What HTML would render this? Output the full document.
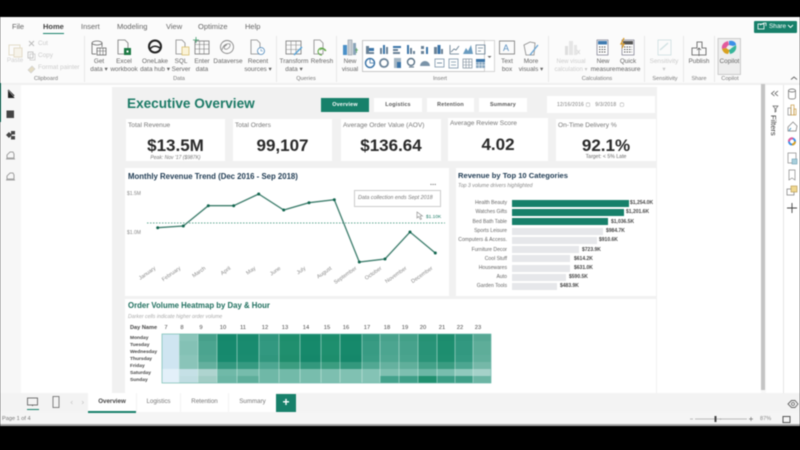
<!DOCTYPE html>
<html><head><meta charset="utf-8"><style>
html,body{margin:0;padding:0;background:#000}
#r{position:relative;width:800px;height:450px;overflow:hidden;background:#000;font-family:"Liberation Sans",sans-serif;color:#444}
#w{position:absolute;left:0;top:0;width:800px;height:450px;filter:blur(.45px)}
#w div{position:absolute;white-space:nowrap}
.t{font-size:7.5px;color:#666}
.c{text-align:center;font-size:6.4px;line-height:8.3px;color:#666}
.g{font-size:5.6px;color:#777;text-align:center}
.sep{width:1px;background:#e9e9e9;top:36px;height:46px}
.card{background:#fff}
.k{font-size:6.6px;color:#777}
.v{font-size:17px;font-weight:bold;color:#2a2a2a;text-align:center}
.nav{background:#fff;font-size:5.4px;font-weight:bold;color:#555;text-align:center;line-height:14px;height:14px;top:98px;letter-spacing:.2px}
.bl{font-size:5.1px;color:#666;text-align:right;width:70px;left:437px;line-height:8px}
.bv{font-size:5px;font-weight:bold;color:#444;line-height:8px}
.b{left:512px;height:7px;background:#e6e7ea}
.hh{font-size:5.8px;color:#444;top:324px;line-height:8px;text-align:center;width:16px}
.dn{font-size:4.9px;color:#444;left:130px;line-height:7px;font-weight:bold}
.tab{font-size:6.2px;color:#777;text-align:center;background:#fff;top:393px;height:19px;line-height:18px}
svg{position:absolute;overflow:visible}
svg text{font-family:"Liberation Sans",sans-serif}
</style></head><body><div id="r"><div id="w">

<!-- app bg -->
<div style="left:0;top:17px;width:800px;height:408px;background:#f7f7f7"></div>
<div style="left:0;top:17px;width:800px;height:67px;background:#fbfbfb"></div>
<div style="left:0;top:83px;width:800px;height:2px;background:#f0f0f0"></div>
<div style="left:21px;top:85px;width:740px;height:308px;background:#fff"></div>
<div style="left:766px;top:85px;width:34px;height:308px;background:#fff"></div>
<div style="left:783px;top:85px;width:1px;height:308px;background:#e6e6e6"></div>
<div style="left:761px;top:84px;width:4px;height:306px;background:#c4c4c4"></div>
<div style="left:0;top:83px;width:1px;height:39px;background:#17806a"></div>

<!-- tabs -->
<div class="t" style="left:12px;top:22px">File</div>
<div class="t" style="left:43px;top:22px;color:#444;font-weight:bold">Home</div>
<div style="left:43px;top:32.5px;width:21px;height:1.5px;background:#17806a"></div>
<div class="t" style="left:81px;top:22px">Insert</div>
<div class="t" style="left:117px;top:22px">Modeling</div>
<div class="t" style="left:166px;top:22px">View</div>
<div class="t" style="left:198px;top:22px">Optimize</div>
<div class="t" style="left:245px;top:22px">Help</div>

<div style="left:754px;top:20.5px;width:43px;height:12px;background:#17806a;border-radius:1px"></div>
<div style="left:769px;top:21.500px;font-size:6.4px;color:#fff;line-height:10px">Share</div>
<svg style="left:0;top:0" width="800" height="450" fill="none">
<rect x="758" y="24" width="6" height="5" stroke="#fff" stroke-width=".8"/><path d="M760 25l4-2h2v3" stroke="#fff" stroke-width=".8"/>
<path d="M788 25l2.500 2.500 2.500-2.500" stroke="#fff" stroke-width=".9"/>

<!-- clipboard -->
<rect x="9" y="45" width="11" height="10" stroke="#e3dcc8"/><rect x="14" y="48" width="8" height="9" fill="#f6f3ea" stroke="#e3dcc8"/>
<path d="M29 41l5 5M34 41l-5 5" stroke="#bbb"/><rect x="28" y="52" width="5" height="6" stroke="#bbb" stroke-width=".8"/><rect x="30" y="54" width="5" height="6" stroke="#ccc" stroke-width=".8"/>
<path d="M28 70l4-4 3 3-4 4z" fill="#e4dcc4" stroke="#ccc" stroke-width=".6"/>
<!-- data -->
<ellipse cx="97" cy="43" rx="5" ry="2" stroke="#666" stroke-width=".8"/><path d="M92 43v11M102 43v4" stroke="#666" stroke-width=".8"/><path d="M92 54h4" stroke="#666" stroke-width=".8"/><rect x="97" y="48" width="9" height="7" stroke="#666" stroke-width=".8"/><path d="M100 48v7M103 48v7M97 51h9" stroke="#666" stroke-width=".6"/>
<path d="M118 40h7l3 3v11h-10z" stroke="#777" stroke-width=".8"/><rect x="124" y="48" width="7" height="7" fill="#1e7a45"/><rect x="126.500" y="50.500" width="2" height="2" fill="#fff"/>
<circle cx="155" cy="46.500" r="6" stroke="#222" stroke-width="2"/><path d="M150 49c3-4 7-3 10-1" stroke="#222" stroke-width="1.500"/>
<path d="M176 40h6l3 3v11h-9z" stroke="#888" stroke-width=".8"/><rect x="182" y="47" width="7" height="8" fill="#fbf3d8" stroke="#d4b860" stroke-width=".7"/>
<rect x="195" y="41" width="14" height="13" stroke="#777" stroke-width=".8"/><path d="M195 44.500h14M199.500 41v13M204 41v13M195 49h14" stroke="#777" stroke-width=".6"/><path d="M196 37v6M193 40h6" stroke="#3d9b6a" stroke-width=".8"/>
<circle cx="227" cy="47" r="6.500" stroke="#888" stroke-width=".9"/><path d="M222 50c1-5 5-7 8-6 1 3-3 6-5 5s0-4 2-4" stroke="#888" stroke-width=".8"/>
<path d="M251 40h6l3 3v11h-9z" stroke="#888" stroke-width=".8"/><circle cx="261" cy="51" r="3.500" fill="#fff" stroke="#4a85b8" stroke-width=".8"/><path d="M261 49v2h2" stroke="#4a85b8" stroke-width=".6"/>
<!-- queries -->
<rect x="286" y="41" width="15" height="13" stroke="#777" stroke-width=".8"/><path d="M286 45h15M291 41v13M296 41v13M286 49.500h15" stroke="#888" stroke-width=".6"/><path d="M294 55l8-8" stroke="#5aa5d8" stroke-width="1.500"/>
<path d="M314 40h6l3 3v11h-9z" stroke="#888" stroke-width=".8"/><path d="M322 55a3.500 3.500 0 1 1 3-4" stroke="#5fa846" stroke-width="1.100"/><path d="M320 50a3.500 3.500 0 0 1 6 1" stroke="#5fa846" stroke-width="1"/>
<!-- new visual -->
<rect x="343" y="45" width="4" height="10" fill="#4a90c8"/><rect x="348" y="40" width="4" height="15" fill="#c8ced4" stroke="#8a96a0" stroke-width=".6"/><rect x="353" y="43" width="3" height="12" fill="#8aa4b8"/><path d="M355 50h3M356.500 48v5" stroke="#4c9a58" stroke-width=".7"/>
<rect x="362.500" y="40.500" width="122" height="31" fill="#fff" stroke="#bbb" stroke-width=".8"/>
<rect x="484.500" y="40.500" width="10" height="31" fill="#fff" stroke="#ccc" stroke-width=".8"/>
<path d="M487.500 56h4l-2 2z" fill="#666"/>
<!-- visual gallery top row -->
<g fill="#6a8297">
<rect x="366" y="46" width="3" height="6"/><rect x="366" y="52" width="8" height="2"/><rect x="369" y="48" width="5" height="3" fill="#3c75a8"/>
<rect x="380" y="48" width="2" height="6"/><rect x="383" y="45" width="2" height="9" fill="#3c75a8"/><rect x="386" y="47" width="2" height="7"/>
<rect x="393" y="46" width="8" height="2" fill="#3c75a8"/><rect x="393" y="49" width="5" height="2"/><rect x="393" y="52" width="7" height="2"/>
<rect x="407" y="45" width="2" height="9" fill="#3c75a8"/><rect x="410" y="48" width="2" height="6"/><rect x="413" y="51" width="2" height="3"/>
<rect x="421" y="46" width="3" height="3"/><rect x="426" y="47" width="2" height="7" fill="#3c75a8"/><rect x="421" y="51" width="3" height="3"/>
<rect x="434" y="47" width="3" height="7"/><rect x="437.500" y="45" width="3" height="9" fill="#3c75a8"/><rect x="441" y="49" width="2" height="5"/>
</g>
<path d="M450 45v9h9M451 52l3-3 2 1 3-4" stroke="#5c7488" stroke-width=".8"/>
<path d="M463 54l3-6 2 3 3-6 2 9z" fill="#6a9cc0"/>
<rect x="476" y="45" width="9" height="9" stroke="#6a8297" stroke-width=".8"/><path d="M478 48h5M478 51h3" stroke="#6a8297" stroke-width=".8"/>
<!-- bottom row -->
<circle cx="370" cy="63" r="4.500" stroke="#3c75a8" stroke-width="1.500"/><path d="M370 59v4h4" stroke="#3c75a8" stroke-width=".8"/>
<circle cx="384" cy="63" r="4" stroke="#6a8297" stroke-width="1.800"/>
<rect x="394" y="58" width="7" height="10" fill="#a4b6c4"/><rect x="397" y="62" width="4" height="6" fill="#3c75a8"/>
<circle cx="411" cy="62" r="3.500" stroke="#5c7488" stroke-width="1.400"/><path d="M409 67h5" stroke="#5c7488"/>
<path d="M420 66a5 5 0 0 1 10 0z" fill="#7a93a8"/>
<rect x="435" y="59" width="9" height="8" stroke="#7a93a8" stroke-width=".8"/><path d="M437 63h5" stroke="#7a93a8"/>
<rect x="449" y="59" width="9" height="9" stroke="#7a93a8" stroke-width=".8"/><path d="M451 62h5M451 65h5" stroke="#7a93a8" stroke-width=".8"/>
<rect x="463" y="59" width="9" height="9" stroke="#7a8a98" stroke-width=".7"/><path d="M463 62h9M463 65h9M466 59v9M469 59v9" stroke="#7a8a98" stroke-width=".6"/>
<rect x="476" y="59" width="9" height="9" fill="#8aa8c0"/><path d="M476 62h9M476 65h9M479 59v9M482 59v9" stroke="#fff" stroke-width=".5"/><rect x="476" y="59" width="9" height="3" fill="#3c75a8"/>
<!-- text box -->
<rect x="499.500" y="41" width="15" height="13" stroke="#777" stroke-width=".8"/><text x="503" y="51" font-size="9" fill="#5a8fc0" stroke="none">A</text>
<path d="M524 45l6-3 5 1-1 12h-8z" stroke="#888" stroke-width=".8"/><path d="M530 55l8-10" stroke="#6ba6d4" stroke-width="1.400"/>
<!-- calculations -->
<g opacity=".45"><rect x="565" y="46" width="3" height="9" fill="#bbb"/><rect x="569" y="41" width="4" height="14" fill="#ccc"/><rect x="574" y="45" width="3" height="10" fill="#ccc"/><path d="M577 50l3 4M580 50l-3 4" stroke="#aaa" stroke-width=".8"/></g>
<rect x="597" y="40" width="11" height="15" fill="#fff" stroke="#778" stroke-width=".7"/><rect x="598" y="41" width="9" height="3.500" fill="#3f7bb0"/><path d="M599 47h7M599 49.500h7M599 52h7" stroke="#555" stroke-width="1.100" stroke-dasharray="1.500 1"/>
<rect x="622" y="40" width="12" height="15" fill="#fff" stroke="#778" stroke-width=".7"/><rect x="623" y="41" width="10" height="3.500" fill="#555"/><path d="M624 47h8M624 49.500h8M624 52h8" stroke="#555" stroke-width="1.100" stroke-dasharray="1.500 1"/><path d="M624 38l-3 6h3l-2 4" stroke="#d89a28" stroke-width="1.300"/>
<!-- sensitivity -->
<g opacity=".5"><rect x="658" y="40" width="13" height="15" stroke="#a8c8cc" stroke-width=".9"/><path d="M660 50l8-7" stroke="#a8c8cc" stroke-width="1.400"/></g>
<!-- publish -->
<path d="M697 42h5v6h4v7h-14v-7h5z" stroke="#555" stroke-width=".8"/><path d="M699 56v-8M697 50l2-2 2 2" stroke="#555" stroke-width=".7"/>
<!-- copilot -->
<rect x="718" y="38.500" width="22.500" height="36" fill="#eee" stroke="#bbb" stroke-width=".7"/>
<path d="M729 41c4-1 7 1 7 4l-3 1-4-1z" fill="#3b8fe8"/><path d="M722 49c-1-4 2-7 6-8l1 4-3 3z" fill="#e25a9c"/><path d="M722 49c1 3 3 5 6 5l2-4-4-2z" fill="#d8a11f"/><path d="M736 45c1 4-1 8-6 9l-1-4 4-3z" fill="#37b59a"/><circle cx="729" cy="47.500" r="2.200" fill="#eee"/>
<path d="M791 79.500l3-2.500 3 2.500" stroke="#666" stroke-width=".9"/>

<!-- left rail icons -->
<path d="M8 90v8h7z" fill="#222"/><path d="M8 90l6 6" stroke="#222" stroke-width="1.500"/><path d="M8 90l7 8" stroke="#fff" stroke-width=".5"/>
<rect x="6.500" y="110.500" width="7.500" height="7.500" fill="#444"/>
<path d="M6 135l3-3 3 3-3 3z" fill="#444"/><rect x="11" y="131" width="4" height="3.500" fill="#444"/><rect x="11" y="136" width="4" height="3.500" fill="#444"/>
<path d="M7 158v-3l3-3h3l1 2v4zM6 159h9" stroke="#888" stroke-width=".8"/>
<path d="M7 179v-3l3-3h3l1 2v4zM6 180h9" stroke="#888" stroke-width=".8"/>

<!-- right pane icons -->
<path d="M772 91l3 2.500-3 2.500M775.500 91l3 2.500-3 2.500" transform="rotate(180 775 93.500)" stroke="#555" stroke-width=".8"/>
<path d="M773 106h5l-2 2.500v3l-1 .5v-3.500z" stroke="#666" stroke-width=".7"/>
<ellipse cx="792" cy="90.500" rx="3.500" ry="1.500" stroke="#666" stroke-width=".7"/><path d="M788.500 90.500v7c0 2 7 2 7 0v-7" stroke="#666" stroke-width=".7"/>
<rect x="788" y="108" width="3" height="7" stroke="#888" stroke-width=".7"/><rect x="791" y="105" width="3" height="10" stroke="#c89a40" stroke-width=".7"/><rect x="794" y="109" width="2" height="6" stroke="#c89a40" stroke-width=".7"/>
<path d="M788 127l5-5 4 4-1 5h-8z" stroke="#777" stroke-width=".7"/><path d="M791 128c-1 1-2 3-2 3" stroke="#58a0c8"/>
<circle cx="792" cy="141.500" r="3" stroke="#3b8fe8" stroke-width="2"/><path d="M789 141.500a3 3 0 0 1 4-3" stroke="#e25a9c" stroke-width="2"/><path d="M792 144.500a3 3 0 0 0 3-3" stroke="#d8a11f" stroke-width="2"/>
<rect x="788" y="153" width="8" height="10" stroke="#888" stroke-width=".7"/><rect x="792" y="159" width="5" height="5" fill="#a8d0dc" stroke="#5a90a8" stroke-width=".5"/>
<path d="M789 170h6v10l-3-2-3 2z" stroke="#888" stroke-width=".7"/>
<rect x="787" y="189" width="7" height="6" stroke="#777" stroke-width=".7"/><rect x="791" y="186" width="6" height="6" fill="#f0d890" stroke="#b09048" stroke-width=".6"/>
<path d="M792 203v10M787 208h10" stroke="#444" stroke-width=".9"/>
</svg>

<!-- ribbon labels -->
<div class="c" style="left:4px;top:57px;width:22px;color:#d0d0d0">Paste</div>
<div class="c" style="left:38px;top:40px;color:#ccc">Cut</div>
<div class="c" style="left:38px;top:52px;color:#ccc">Copy</div>
<div class="c" style="left:38px;top:64px;color:#ccc">Format painter</div>
<div class="g" style="left:20px;top:76px;width:52px">Clipboard</div>
<div class="sep" style="left:84px"></div>
<div class="c" style="left:87px;top:58px;width:24px">Get<br>data ▾</div>
<div class="c" style="left:109px;top:58px;width:30px">Excel<br>workbook</div>
<div class="c" style="left:138px;top:58px;width:34px">OneLake<br>data hub ▾</div>
<div class="c" style="left:171px;top:58px;width:20px">SQL<br>Server</div>
<div class="c" style="left:191px;top:58px;width:22px">Enter<br>data</div>
<div class="c" style="left:212px;top:58px;width:32px">Dataverse</div>
<div class="c" style="left:243px;top:58px;width:30px">Recent<br>sources ▾</div>
<div class="g" style="left:165px;top:76px;width:28px">Data</div>
<div class="sep" style="left:276px"></div>
<div class="c" style="left:279px;top:58px;width:30px">Transform<br>data ▾</div>
<div class="c" style="left:308px;top:58px;width:28px">Refresh</div>
<div class="g" style="left:288px;top:76px;width:36px">Queries</div>
<div class="sep" style="left:336px"></div>
<div class="c" style="left:339px;top:58px;width:22px">New<br>visual</div>
<div class="g" style="left:425px;top:76px;width:30px">Insert</div>
<div class="c" style="left:497px;top:58px;width:20px">Text<br>box</div>
<div class="c" style="left:518px;top:58px;width:26px">More<br>visuals ▾</div>
<div class="sep" style="left:548px"></div>
<div class="c" style="left:553px;top:58px;width:36px;color:#ccc;font-size:6px">New visual<br>calculation ▾</div>
<div class="c" style="left:590px;top:58px;width:26px">New<br>measure</div>
<div class="c" style="left:615px;top:58px;width:26px">Quick<br>measure</div>
<div class="g" style="left:572px;top:76px;width:50px">Calculations</div>
<div class="sep" style="left:644px"></div>
<div class="c" style="left:649px;top:58px;width:30px;color:#ccc">Sensitivity<br>▾</div>
<div class="g" style="left:648px;top:76px;width:34px">Sensitivity</div>
<div class="sep" style="left:683px"></div>
<div class="c" style="left:687px;top:58px;width:24px">Publish</div>
<div class="g" style="left:687px;top:76px;width:24px">Share</div>
<div class="sep" style="left:714px"></div>
<div class="c" style="left:717px;top:58px;width:25px">Copilot</div>
<div class="g" style="left:718px;top:76px;width:24px">Copilot</div>

<!-- filters -->
<div style="left:768px;top:127px;font-size:7.6px;color:#333;transform:rotate(90deg);transform-origin:0 0;margin-left:10px;margin-top:-12px">Filters</div>

<!-- report page -->
<div style="left:112px;top:87px;width:545px;height:308px;background:#f1f1f1"></div>
<div style="left:127px;top:95px;font-size:13.6px;font-weight:bold;color:#1c7a66;line-height:18px">Executive Overview</div>
<div class="nav" style="left:321px;width:48px;background:#17806a;color:#fff">Overview</div>
<div class="nav" style="left:374px;width:48px">Logistics</div>
<div class="nav" style="left:427px;width:47px">Retention</div>
<div class="nav" style="left:479px;width:48px">Summary</div>
<div style="left:547px;top:96px;width:108px;height:17px;background:#fff"></div>
<div style="left:557px;top:101px;font-size:5px;color:#777;line-height:8px;letter-spacing:.2px">12/16/2016 ▢ &nbsp; 9/3/2018 &nbsp;▢</div>

<div class="card" style="left:126px;top:119px;width:99px;height:42px"></div>
<div class="k" style="left:128px;top:122px">Total Revenue</div>
<div class="v" style="left:126px;top:136px;width:99px">$13.5M</div>
<div style="left:126px;top:155px;width:99px;text-align:center;font-size:5px;font-style:italic;color:#777">Peak: Nov '17 ($987K)</div>

<div class="card" style="left:233px;top:119px;width:99px;height:42px"></div>
<div class="k" style="left:235px;top:122px">Total Orders</div>
<div class="v" style="left:233px;top:136px;width:99px">99,107</div>

<div class="card" style="left:341px;top:119px;width:100px;height:42px"></div>
<div class="k" style="left:343px;top:122px">Average Order Value (AOV)</div>
<div class="v" style="left:341px;top:136px;width:100px">$136.64</div>

<div class="card" style="left:448px;top:118px;width:100px;height:43px"></div>
<div class="k" style="left:450px;top:120px">Average Review Score</div>
<div class="v" style="left:448px;top:135px;width:100px">4.02</div>

<div class="card" style="left:556px;top:119px;width:100px;height:42px"></div>
<div class="k" style="left:558px;top:122px">On-Time Delivery %</div>
<div class="v" style="left:556px;top:136px;width:100px">92.1%</div>
<div style="left:556px;top:154px;width:100px;text-align:center;font-size:5.2px;color:#666">Target: &lt; 5% Late</div>

<div class="card" style="left:125px;top:168px;width:324px;height:128px"></div>
<div style="left:128px;top:171px;font-size:7.8px;font-weight:bold;color:#1e3a52;line-height:11px">Monthly Revenue Trend (Dec 2016 - Sep 2018)</div>
<div style="left:127px;top:191px;font-size:5px;color:#888">$1.5M</div>
<div style="left:127px;top:230px;font-size:5px;color:#888">$1.0M</div>
<div style="left:430px;top:180px;font-size:7px;color:#666;font-weight:bold;letter-spacing:.2px">...</div>
<div style="left:354px;top:190px;width:85px;height:15px;border:1px solid #ccc;background:#fff;font-size:5.4px;font-style:italic;color:#777;line-height:15px;text-indent:3px">Data collection ends Sept 2018</div>
<div style="left:426px;top:215px;font-size:4.8px;color:#1a7a64">$1.10K</div>

<svg style="left:0;top:0" width="800" height="450" fill="none">
<path d="M147 223H445" stroke="#2e8a72" stroke-width=".8" stroke-dasharray="1.500 1.500"/>
<path d="M157.700 227.700L183.300 226 208.300 205.700 233.700 205.700 258.700 194 283.700 210 309 202.700 334.300 199.700 359.300 262 385 259 410 232 435.300 253" stroke="#3d7d6c" stroke-width="1.300"/>
<g fill="#12664f"><circle cx="157.700" cy="227.700" r="1.500"/><circle cx="183.300" cy="226" r="1.500"/><circle cx="208.300" cy="205.700" r="1.500"/><circle cx="233.700" cy="205.700" r="1.500"/><circle cx="258.700" cy="194" r="1.500"/><circle cx="283.700" cy="210" r="1.500"/><circle cx="309" cy="202.700" r="1.500"/><circle cx="334.300" cy="199.700" r="1.500"/><circle cx="359.300" cy="262" r="1.500"/><circle cx="385" cy="259" r="1.500"/><circle cx="410" cy="232" r="1.500"/><circle cx="435.300" cy="253" r="1.500"/></g>
<path d="M417 212l0 6 1.500-1.500 2 3 1-.5-1.500-3h2.500z" fill="#fff" stroke="#888" stroke-width=".6"/>
<g font-size="5.400" fill="#888" text-anchor="end">
<text transform="translate(156 269) rotate(-35)">January</text>
<text transform="translate(181 269) rotate(-35)">February</text>
<text transform="translate(206 269) rotate(-35)">March</text>
<text transform="translate(231 269) rotate(-35)">April</text>
<text transform="translate(256 269) rotate(-35)">May</text>
<text transform="translate(281 269) rotate(-35)">June</text>
<text transform="translate(306 269) rotate(-35)">July</text>
<text transform="translate(332 269) rotate(-35)">August</text>
<text transform="translate(357 269) rotate(-35)">September</text>
<text transform="translate(382 269) rotate(-35)">October</text>
<text transform="translate(407 269) rotate(-35)">November</text>
<text transform="translate(433 269) rotate(-35)">December</text>
</g>
</svg>

<div class="card" style="left:456px;top:168px;width:200px;height:128px"></div>
<div style="left:458px;top:170px;font-size:7.6px;font-weight:bold;color:#1e3a52;line-height:11px">Revenue by Top 10 Categories</div>
<div style="left:458px;top:183px;font-size:5.2px;font-style:italic;color:#888">Top 3 volume drivers highlighted</div>

<div class="b" style="top:200px;width:117px;background:#17806a"></div><div class="bl" style="top:199px">Health Beauty</div><div class="bv" style="left:630px;top:199px">$1,254.0K</div>
<div class="b" style="top:209px;width:112px;background:#17806a"></div><div class="bl" style="top:208px">Watches Gifts</div><div class="bv" style="left:626px;top:208px">$1,201.6K</div>
<div class="b" style="top:218px;width:96px;background:#17806a"></div><div class="bl" style="top:218px">Bed Bath Table</div><div class="bv" style="left:611px;top:218px">$1,036.5K</div>
<div class="b" style="top:227.500px;width:91px"></div><div class="bl" style="top:227px">Sports Leisure</div><div class="bv" style="left:606px;top:227px">$984.7K</div>
<div class="b" style="top:237px;width:85px"></div><div class="bl" style="top:236px">Computers &amp; Access.</div><div class="bv" style="left:599px;top:236px">$910.6K</div>
<div class="b" style="top:246px;width:67px"></div><div class="bl" style="top:246px">Furniture Decor</div><div class="bv" style="left:582px;top:246px">$723.9K</div>
<div class="b" style="top:255px;width:58px"></div><div class="bl" style="top:255px">Cool Stuff</div><div class="bv" style="left:574px;top:255px">$614.2K</div>
<div class="b" style="top:264.500px;width:58px"></div><div class="bl" style="top:264px">Housewares</div><div class="bv" style="left:574px;top:264px">$631.0K</div>
<div class="b" style="top:273.500px;width:54px"></div><div class="bl" style="top:273px">Auto</div><div class="bv" style="left:569px;top:273px">$590.5K</div>
<div class="b" style="top:283px;width:45px"></div><div class="bl" style="top:282px">Garden Tools</div><div class="bv" style="left:560px;top:282px">$483.9K</div>

<div class="card" style="left:125px;top:299px;width:531px;height:95px"></div>
<div style="left:128px;top:300px;font-size:7.8px;font-weight:bold;color:#1f6f5e;line-height:11px">Order Volume Heatmap by Day &amp; Hour</div>
<div style="left:128px;top:314px;font-size:5.2px;font-style:italic;color:#aaa">Darker cells indicate higher order volume</div>
<div style="left:130px;top:324px;font-size:5.6px;font-weight:bold;color:#444;line-height:8px">Day Name</div>
<div class="hh" style="left:158px">7</div><div class="hh" style="left:174px">8</div><div class="hh" style="left:193px">9</div><div class="hh" style="left:215px">10</div><div class="hh" style="left:235px">11</div><div class="hh" style="left:257px">12</div><div class="hh" style="left:277px">13</div><div class="hh" style="left:298px">14</div><div class="hh" style="left:319px">15</div><div class="hh" style="left:338px">16</div><div class="hh" style="left:359px">17</div><div class="hh" style="left:379px">18</div><div class="hh" style="left:397px">19</div><div class="hh" style="left:415px">20</div><div class="hh" style="left:434px">21</div><div class="hh" style="left:452px">22</div><div class="hh" style="left:470px">23</div>
<div class="dn" style="top:335px">Monday</div><div class="dn" style="top:342px">Tuesday</div><div class="dn" style="top:349px">Wednesday</div><div class="dn" style="top:356px">Thursday</div><div class="dn" style="top:363px">Friday</div><div class="dn" style="top:370px">Saturday</div><div class="dn" style="top:377px">Sunday</div>

<svg style="left:0;top:0" width="800" height="450">
<g shape-rendering="crispEdges">
<rect x="162" y="334" width="17" height="35" fill="#cfe5f1"/><rect x="162" y="369" width="17" height="14" fill="#e3f0f9"/>
<rect x="179" y="334" width="19" height="35" fill="#8ac4b9"/><rect x="179" y="369" width="19" height="7" fill="#c5e0e6"/><rect x="179" y="376" width="19" height="7" fill="#c0dde2"/>
<rect x="198" y="334" width="19" height="35" fill="#4fa691"/><rect x="198" y="369" width="19" height="7" fill="#aed4cf"/><rect x="198" y="376" width="19" height="7" fill="#a1cdc5"/>
<rect x="217" y="334" width="20" height="35" fill="#178a6e"/><rect x="217" y="369" width="20" height="7" fill="#70b9a8"/><rect x="217" y="376" width="20" height="7" fill="#6ab5a4"/>
<rect x="237" y="334" width="22" height="35" fill="#1b8c70"/><rect x="237" y="369" width="22" height="7" fill="#76bcac"/><rect x="237" y="376" width="22" height="7" fill="#5eae9b"/>
<rect x="259" y="334" width="20" height="35" fill="#359a82"/><rect x="259" y="369" width="20" height="14" fill="#6fb8a7"/>
<rect x="279" y="334" width="21" height="35" fill="#22906f"/><rect x="279" y="369" width="21" height="14" fill="#72baa9"/>
<rect x="300" y="334" width="21" height="35" fill="#178a6c"/><rect x="300" y="369" width="21" height="14" fill="#78bdad"/>
<rect x="321" y="334" width="19" height="35" fill="#20906f"/><rect x="321" y="369" width="19" height="14" fill="#7dbfb0"/>
<rect x="340" y="334" width="22" height="35" fill="#178a6c"/><rect x="340" y="369" width="22" height="14" fill="#80c1b2"/>
<rect x="362" y="334" width="18" height="35" fill="#3b9d85"/><rect x="362" y="369" width="18" height="14" fill="#84c3b5"/>
<rect x="380" y="334" width="19" height="35" fill="#50a792"/><rect x="380" y="369" width="19" height="7" fill="#7fc0b1"/><rect x="380" y="376" width="19" height="7" fill="#44a28c"/>
<rect x="399" y="334" width="19" height="35" fill="#4aa48e"/><rect x="399" y="369" width="19" height="7" fill="#7dbfb0"/><rect x="399" y="376" width="19" height="7" fill="#3f9f88"/>
<rect x="418" y="334" width="19" height="35" fill="#2a9478"/><rect x="418" y="369" width="19" height="7" fill="#6cb7a5"/><rect x="418" y="376" width="19" height="7" fill="#21906f"/>
<rect x="437" y="334" width="18" height="35" fill="#1f8f70"/><rect x="437" y="369" width="18" height="7" fill="#78bdae"/><rect x="437" y="376" width="18" height="7" fill="#3a9d85"/>
<rect x="455" y="334" width="18" height="35" fill="#359a82"/><rect x="455" y="369" width="18" height="7" fill="#90c9bd"/><rect x="455" y="376" width="18" height="7" fill="#3f9f88"/>
<rect x="473" y="334" width="18" height="35" fill="#62af9c"/><rect x="473" y="369" width="18" height="7" fill="#a5d1c9"/><rect x="473" y="376" width="18" height="7" fill="#6cb5a4"/>
<rect x="198" y="334" width="293" height="7" fill="#0a7a5c" opacity=".12"/>
<rect x="198" y="362" width="293" height="7" fill="#fff" opacity=".12"/>
<rect x="259" y="355" width="103" height="7" fill="#0a7a5c" opacity=".1"/>
<rect x="179" y="341" width="312" height="14" fill="#0a7a5c" opacity=".04"/>
</g>
<g stroke="#d8f0ea" stroke-width=".6" opacity=".8">
<path d="M179 334v49M198 334v49M217 334v49M237 334v49M259 334v49M279 334v49M300 334v49M321 334v49M340 334v49M362 334v49M380 334v49M399 334v49M418 334v49M437 334v49M455 334v49M473 334v49"/>
</g>
<rect x="162" y="334" width="329" height="49" fill="none" stroke="#5fb3a4" stroke-width=".6"/>
</svg>

<!-- bottom -->
<div style="left:0;top:393px;width:800px;height:19px;background:#f3f3f3"></div>
<div style="left:0;top:412px;width:800px;height:12px;background:#f5f5f5"></div>
<div style="left:0;top:424px;width:800px;height:2px;background:#a8a8a8"></div>
<div class="tab" style="left:88px;width:48px;color:#444;font-weight:bold;font-size:6.2px">Overview</div>
<div style="left:88px;top:411px;width:48px;height:1.5px;background:#17806a"></div>
<div class="tab" style="left:137px;width:43px">Logistics</div>
<div class="tab" style="left:181px;width:47px">Retention</div>
<div class="tab" style="left:229px;width:47px">Summary</div>
<div style="left:276px;top:394px;width:20px;height:18px;background:#17806a;color:#fff;text-align:center;font-size:12px;font-weight:bold;line-height:17px">+</div>
<div style="left:2px;top:415px;font-size:5.6px;color:#777;line-height:8px">Page 1 of 4</div>
<div style="left:760px;top:415px;font-size:5.6px;color:#888;line-height:8px">87%</div>
<svg style="left:0;top:0" width="800" height="450" fill="none">
<rect x="27.500" y="398" width="10" height="7" stroke="#555" stroke-width=".8"/><path d="M32.500 405v1" stroke="#555"/><path d="M27 409.500h12" stroke="#17806a" stroke-width="1"/>
<rect x="53" y="396.500" width="6" height="11" stroke="#666" stroke-width=".8"/>
<path d="M72.500 401l-1.500 1.500 1.500 1.500M82 401l1.500 1.500-1.500 1.500" stroke="#ccc" stroke-width=".8"/>
<path d="M690 419h3M695 419h52" stroke="#bbb" stroke-width="1"/><rect x="714.500" y="416" width="2" height="6" fill="#444"/><circle cx="720.500" cy="419" r=".8" fill="#aaa"/>
<path d="M751 417v4M749 419h4" stroke="#777" stroke-width=".7"/>
<rect x="783" y="416.500" width="7" height="6" stroke="#555" stroke-width="1"/>
<path d="M788 404l3.500-3.500h3.500l3 3.500-3 3.500h-3.500z" stroke="#666" stroke-width=".9"/>
<circle cx="793" cy="404" r="1.500" stroke="#666" stroke-width=".8"/>
</svg>
</div></div></body></html>
